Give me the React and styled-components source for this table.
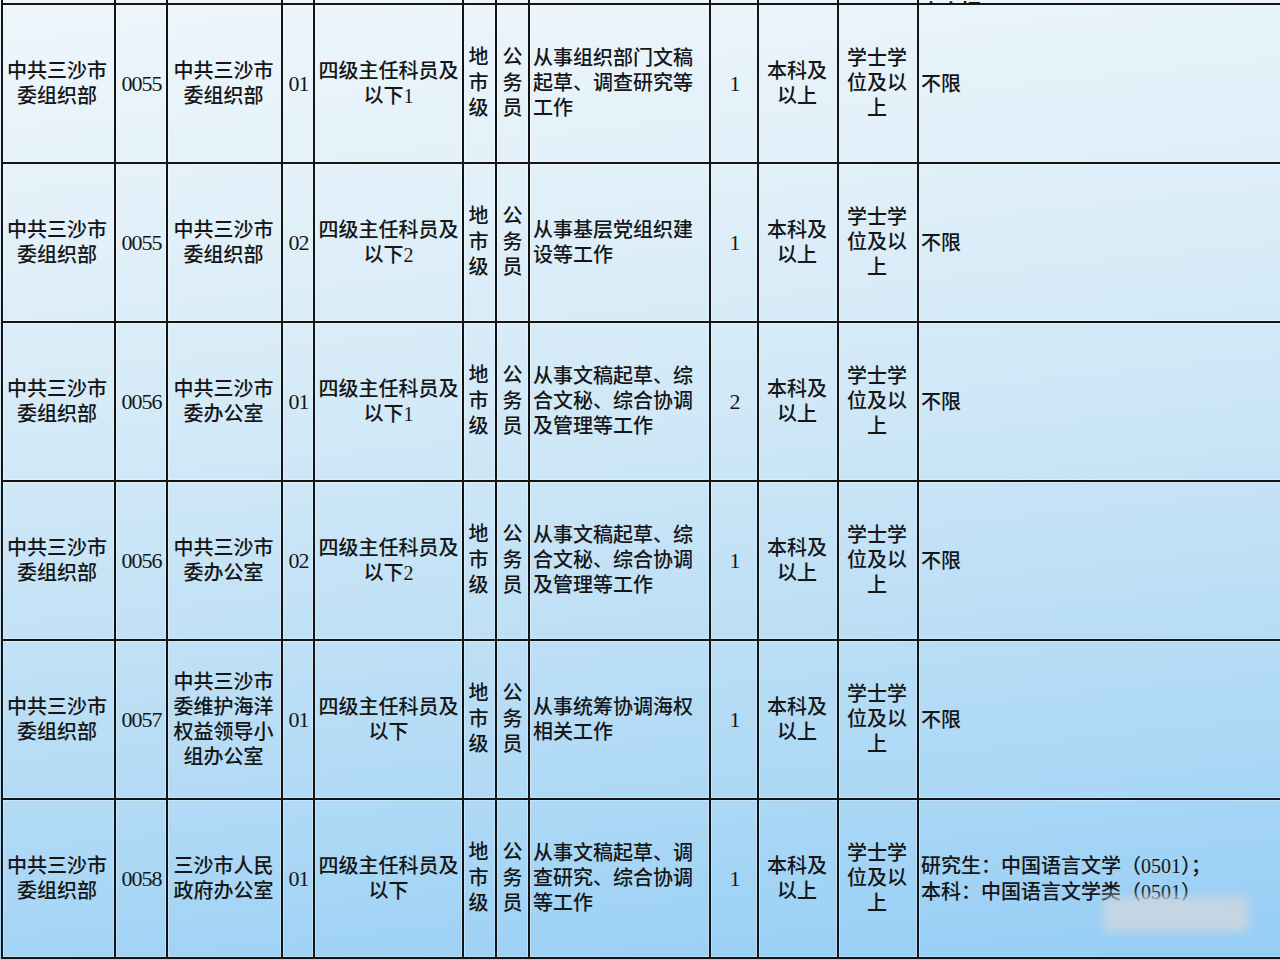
import React from "react";
import styled, { createGlobalStyle } from "styled-components";

const Global = createGlobalStyle`
  html, body { margin: 0; padding: 0; }
  body { overflow: hidden; }
`;

const COLS = "113px 52px 115px 32px 149px 33px 33px 181px 48px 80px 80px 1fr";
const LINE = "#141414";

const Page = styled.div`
  width: 1280px;
  height: 960px;
  overflow: hidden;
  background: linear-gradient(174deg, #eef6fb 0%, #e2f0f9 22%, #d2e9f7 42%, #bfe0f6 62%, #aad7f5 82%, #94cdf5 100%);
  font-family: "Liberation Serif", "Noto Sans CJK SC", serif;
  color: #161616;
`;

const Table = styled.div`
  margin-left: 1px;
  width: 1279px;
  border-left: 2px solid ${LINE};
  display: flex;
  flex-direction: column;
`;

const Row = styled.div`
  display: grid;
  grid-template-columns: ${COLS};
  height: ${(p) => p.$h}px;
`;

const Cell = styled.div`
  box-sizing: border-box;
  position: relative;
  display: flex;
  align-items: ${(p) => (p.$peek ? "flex-end" : "center")};
  justify-content: ${(p) => (p.$left ? "flex-start" : "center")};
  text-align: ${(p) => (p.$left ? "left" : "center")};
  padding-left: ${(p) => (p.$left ? p.$pad ?? 3 : 0)}px;
  padding-right: ${(p) => p.$pr ?? 0}px;
  border-right: ${(p) => (p.$last ? "none" : `2px solid ${LINE}`)};
  border-bottom: 2px solid ${LINE};
  box-shadow: inset 0 0 0 1px rgba(255, 255, 255, 0.3);
  overflow: hidden;
  font-size: 20px;
  line-height: 25px;
  font-weight: 500;
  white-space: nowrap;
`;

const Num = styled.span`
  font-size: 22px;
  letter-spacing: -1px;
  margin-right: -1px;
`;

const Lines = styled.div`
  display: flex;
  flex-direction: column;
  align-items: ${(p) => (p.$left ? "flex-start" : "center")};
  line-height: ${(p) => p.$lh ?? 25}px;
`;

const Peek = styled.span`
  display: block;
  line-height: 25px;
  margin-bottom: -22px;
  font-weight: 700;
`;

const Smudge = styled.div`
  position: absolute;
  left: 184px;
  top: 96px;
  width: 146px;
  height: 36px;
  background: rgba(200, 214, 226, 0.92);
  filter: blur(5px);
  border-radius: 6px;
`;

const rows = [
  {
    org: "中共三沙市|委组织部",
    code: "0055",
    dept: "中共三沙市|委组织部",
    no: "01",
    pos: "四级主任科员及|以下1",
    duty: "从事组织部门文稿|起草、调查研究等|工作",
    n: "1",
    req: "不限",
  },
  {
    org: "中共三沙市|委组织部",
    code: "0055",
    dept: "中共三沙市|委组织部",
    no: "02",
    pos: "四级主任科员及|以下2",
    duty: "从事基层党组织建|设等工作",
    n: "1",
    req: "不限",
  },
  {
    org: "中共三沙市|委组织部",
    code: "0056",
    dept: "中共三沙市|委办公室",
    no: "01",
    pos: "四级主任科员及|以下1",
    duty: "从事文稿起草、综|合文秘、综合协调|及管理等工作",
    n: "2",
    req: "不限",
  },
  {
    org: "中共三沙市|委组织部",
    code: "0056",
    dept: "中共三沙市|委办公室",
    no: "02",
    pos: "四级主任科员及|以下2",
    duty: "从事文稿起草、综|合文秘、综合协调|及管理等工作",
    n: "1",
    req: "不限",
  },
  {
    org: "中共三沙市|委组织部",
    code: "0057",
    dept: "中共三沙市|委维护海洋|权益领导小|组办公室",
    no: "01",
    pos: "四级主任科员及|以下",
    duty: "从事统筹协调海权|相关工作",
    n: "1",
    req: "不限",
  },
  {
    org: "中共三沙市|委组织部",
    code: "0058",
    dept: "三沙市人民|政府办公室",
    no: "01",
    pos: "四级主任科员及|以下",
    duty: "从事文稿起草、调|查研究、综合协调|等工作",
    n: "1",
    req: "研究生：中国语言文学（0501）；|本科：中国语言文学类（0501）",
    smudge: true,
  },
];

const Text = ({ s, left, lh }) => (
  <Lines $left={left} $lh={lh}>
    {s.split("|").map((l, i) => (
      <span key={i}>{l}</span>
    ))}
  </Lines>
);

export default function App() {
  return (
    <Page>
      <Global />
      <Table>
        <Row $h={5}>
          {Array.from({ length: 11 }).map((_, i) => (
            <Cell key={i} $peek />
          ))}
          <Cell $peek $last $left $pad={2}>
            <Peek>内直招</Peek>
          </Cell>
        </Row>
        {rows.map((r, i) => (
          <Row key={i} $h={159}>
            <Cell $pr={3}><Text s={r.org} /></Cell>
            <Cell><Num>{r.code}</Num></Cell>
            <Cell $pr={2}><Text s={r.dept} /></Cell>
            <Cell><Num>{r.no}</Num></Cell>
            <Cell><Text s={r.pos} /></Cell>
            <Cell $pr={2}><Text s="地|市|级" lh={25.5} /></Cell>
            <Cell><Text s="公|务|员" lh={25.5} /></Cell>
            <Cell $left><Text s={r.duty} left /></Cell>
            <Cell><Num>{r.n}</Num></Cell>
            <Cell $pr={2}><Text s="本科及|以上" /></Cell>
            <Cell $pr={2}><Text s="学士学|位及以|上" /></Cell>
            <Cell $left $last $pad={2}>
              <Text s={r.req} left lh={26} />
              {r.smudge && <Smudge />}
            </Cell>
          </Row>
        ))}
      </Table>
    </Page>
  );
}
